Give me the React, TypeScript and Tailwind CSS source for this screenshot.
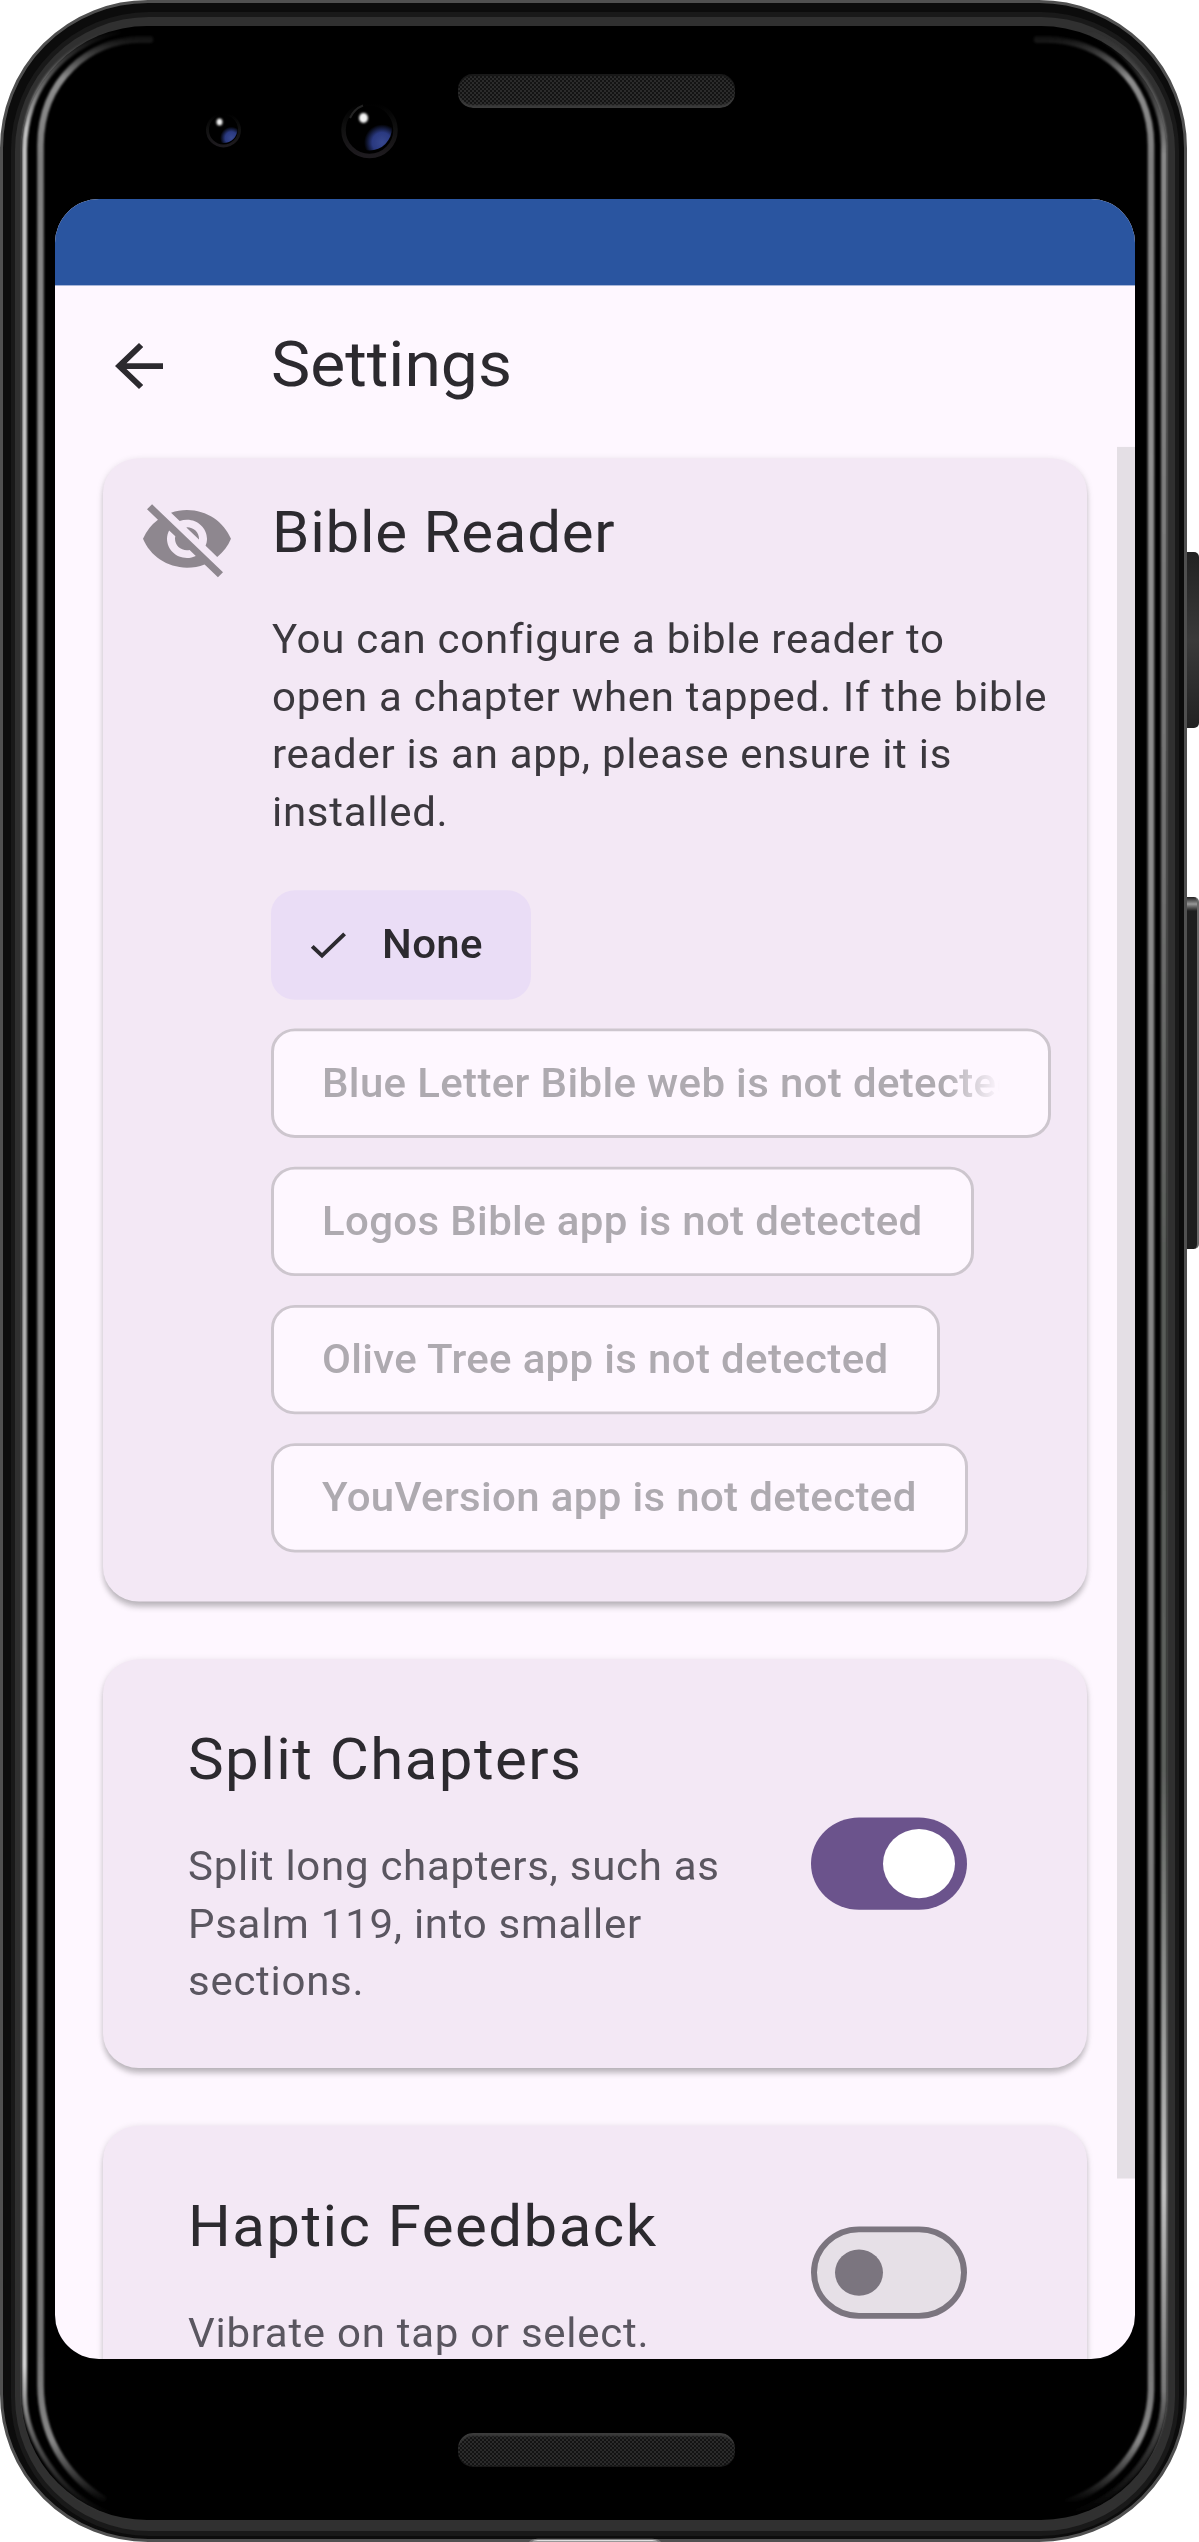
import type { ReactNode } from "react";
import { MdArrowBack, MdCheck, MdVisibilityOff } from "react-icons/md";

const READERS = [
  "Blue Letter Bible web is not detected",
  "Logos Bible app is not detected",
  "Olive Tree app is not detected",
  "YouVersion app is not detected",
];

function Card({ children, className }: { children: ReactNode; className: string }) {
  return (
    <section
      className={`flex shrink-0 rounded-[36px] bg-[#f3e8f5] shadow-[0_6px_6px_-1px_rgba(0,0,0,0.2),0_2px_8px_rgba(0,0,0,0.13)] ${className}`}
    >
      {children}
    </section>
  );
}

function Toggle({ on }: { on: boolean }) {
  return on ? (
    <div role="switch" aria-checked="true" className="flex h-24 w-[156px] shrink-0 items-center justify-end rounded-full bg-[#6b538c] pr-3">
      <div className="size-[72px] rounded-full bg-white" />
    </div>
  ) : (
    <div role="switch" aria-checked="false" className="flex h-24 w-[156px] shrink-0 items-center rounded-full border-[6px] border-[#7b757f] bg-[#e6e0e7] pl-[18px]">
      <div className="size-12 rounded-full bg-[#7b757f]" />
    </div>
  );
}

function ToggleCard({ title, text, on }: { title: string; text: string; on: boolean }) {
  return (
    <Card className="items-center justify-between py-[60px] pl-[85px] pr-[120px]">
      <div className="w-[560px]">
        <h2 className="text-[60px] leading-[90px] tracking-[1.45px]">{title}</h2>
        <p className="mt-9 text-[42px] leading-[60px] tracking-[0.72px] text-[#5a5660]">{text}</p>
      </div>
      <Toggle on={on} />
    </Card>
  );
}

function Speaker({ className }: { className: string }) {
  return (
    <div
      className={`ml-[3px] h-[34px] w-[277px] rounded-[15px] bg-[#141414] bg-[repeating-conic-gradient(#2b2b2b_0_25%,#131313_0_50%)] bg-[length:4px_4px] ${className}`}
    />
  );
}

function Bezel() {
  return (
    <svg className="pointer-events-none absolute -left-[3px] -top-[3px] h-[2542px] w-[1187px]" viewBox="0 0 1187 2542" fill="none">
      <defs>
        <linearGradient id="edge" gradientUnits="userSpaceOnUse" x1="0" y1="30" x2="0" y2="2515">
          <stop offset="0" stopColor="#aaa" stopOpacity="0" />
          <stop offset="0.04" stopColor="#c0c0c0" />
          <stop offset="0.3" stopColor="#c8c8c8" />
          <stop offset="0.5" stopColor="#b0b0b0" />
          <stop offset="0.94" stopColor="#d4d4d4" />
          <stop offset="1" stopColor="#888" stopOpacity="0" />
        </linearGradient>
        <linearGradient id="edgeRight" gradientUnits="userSpaceOnUse" x1="0" y1="30" x2="0" y2="2515">
          <stop offset="0" stopColor="#666" stopOpacity="0" />
          <stop offset="0.05" stopColor="#888" />
          <stop offset="0.35" stopColor="#6e6e6e" />
          <stop offset="0.5" stopColor="#585b58" />
          <stop offset="0.7" stopColor="#5c5f5c" />
          <stop offset="0.87" stopColor="#bdbdbd" />
          <stop offset="0.95" stopColor="#777" />
          <stop offset="1" stopColor="#444" stopOpacity="0" />
        </linearGradient>
        <linearGradient id="inner" gradientUnits="userSpaceOnUse" x1="0" y1="39" x2="0" y2="2503">
          <stop offset="0" stopColor="#777" stopOpacity="0.15" />
          <stop offset="0.016" stopColor="#8c8c8c" />
          <stop offset="0.05" stopColor="#7e7e7e" />
          <stop offset="0.17" stopColor="#909090" />
          <stop offset="0.94" stopColor="#767676" />
          <stop offset="0.975" stopColor="#858585" />
          <stop offset="1" stopColor="#777" stopOpacity="0" />
        </linearGradient>
        <linearGradient id="rim" x1="0" y1="0" x2="0" y2="1">
          <stop offset="0" stopColor="#000" />
          <stop offset="0.5" stopColor="#111" />
          <stop offset="1" stopColor="#1e1b1f" />
        </linearGradient>
        <filter id="soft" x="-10%" y="-1%" width="120%" height="102%">
          <feGaussianBlur stdDeviation="1.1" />
        </filter>
        <filter id="glow" x="-100%" y="-100%" width="300%" height="300%">
          <feGaussianBlur stdDeviation="1.3" />
        </filter>
        <radialGradient id="blue" cx="0.78" cy="0.82" r="0.4">
          <stop offset="0" stopColor="#37488f" />
          <stop offset="0.55" stopColor="#2a3980" />
          <stop offset="1" stopColor="#000" />
        </radialGradient>
      </defs>
      <g filter="url(#soft)" strokeLinecap="round">
        <path d="M119 31C77 42 46 68 32 106Q24.500 128 24.500 150V2395C25 2440 60 2496 110 2514" stroke="url(#edge)" strokeWidth="5" />
        <path d="M1090 33C1125 48 1163 90 1164 145V2400C1162 2450 1125 2497 1070 2514" stroke="url(#edgeRight)" strokeWidth="6" />
        <path d="M150 39.500H140C90 39.500 41 80 40.500 145V2385C41 2435 64 2474 103 2499" stroke="url(#inner)" strokeWidth="6.500" />
        <path d="M1037 39.500H1047C1100 39.500 1151 80 1151 145V2390C1150 2440 1118 2484 1068 2502" stroke="url(#inner)" strokeWidth="6.500" />
      </g>
      <circle cx="223.500" cy="130" r="16" stroke="url(#rim)" strokeWidth="3" />
      <circle cx="223.500" cy="129" r="14" fill="url(#blue)" />
      <ellipse cx="219.500" cy="122" rx="3" ry="3.500" fill="#f2f2f2" filter="url(#glow)" />
      <circle cx="369.500" cy="130" r="26" stroke="url(#rim)" strokeWidth="4.500" />
      <circle cx="369.500" cy="128" r="22.500" fill="url(#blue)" />
      <path d="M350 118Q354 109 363 105.500" stroke="#222" strokeWidth="2" />
      <ellipse cx="363.500" cy="118" rx="4.500" ry="5" fill="#f4f4f4" filter="url(#glow)" />
      <path d="M530 2542Q532 2539.500 538 2539.500H652Q658 2539.500 660 2542Z" fill="#fff" stroke="#7a7a7a" strokeWidth="1.500" />
    </svg>
  );
}

function Screen() {
  return (
    <main className="h-[2160px] w-[1080px] overflow-hidden rounded-[44px] bg-[#fef7ff]">
      <div className="flex h-[2250px] w-[1080px] origin-top-left scale-y-[0.96] flex-col text-[#2c2a2f]">
        <div className="h-[90px] shrink-0 bg-[#2a55a0]" />
        <header className="flex h-[168px] shrink-0 items-center pl-12">
          <MdArrowBack className="size-[72px]" />
          <h1 className="-mt-0.5 ml-24 text-[66px] leading-[84px]">Settings</h1>
        </header>
        <div className="flex min-h-0 flex-1 justify-between overflow-hidden">
          <div className="ml-12 mt-3 flex w-[984px] flex-col gap-[60px]">
            <Card className="h-[1191px] pl-9 pr-9">
              <MdVisibilityOff className="mt-9 size-24 shrink-0 text-[#8e878f]" />
              <div className="ml-9 mt-[33px] w-[780px]">
                <h2 className="pl-px text-[60px] leading-[90px] tracking-[0.75px]">Bible Reader</h2>
                <p className="mt-9 pl-px text-[42px] leading-[60px] tracking-[0.72px] text-[#3b383e]">
                  You can configure a bible reader to
                  <br />
                  open a chapter when tapped. If the bible
                  <br />
                  reader is an app, please ensure it is
                  <br />
                  installed.
                </p>
                <div className="mt-[51px] flex flex-col items-start gap-[30px] text-[42px] font-medium leading-[60px] tracking-[0.34px]">
                  <button className="flex h-[114px] items-center rounded-3xl bg-[#eaddf6] pl-[33px] pr-12">
                    <MdCheck className="mr-[30px] size-12" />
                    None
                  </button>
                  {READERS.map((name) => (
                    <button key={name} className="flex h-[114px] max-w-full items-center rounded-3xl border-[3px] border-[#cdc6ce] bg-[#fef7ff] px-12">
                      <span
                        className={`overflow-hidden whitespace-nowrap text-[#aeaab0] ${
                          name.startsWith("Blue") ? "[mask-image:linear-gradient(to_right,#000_92%,transparent)]" : ""
                        }`}
                      >
                        {name}
                      </span>
                    </button>
                  ))}
                </div>
              </div>
            </Card>
            <ToggleCard title="Split Chapters" text="Split long chapters, such as Psalm 119, into smaller sections." on />
            <ToggleCard title="Haptic Feedback" text="Vibrate on tap or select." on={false} />
          </div>
          <div className="h-[1804px] w-[18px] bg-[#e4dfe5]" />
        </div>
      </div>
    </main>
  );
}

export default function App() {
  return (
    <div className="flex h-[2542px] w-[1199px] overflow-hidden bg-white font-['Roboto',sans-serif]">
      <div className="relative h-[2542px] w-[1187px] shrink-0 rounded-[148px] border-[3px] border-[#505050] bg-[#0c0c0c] pb-[3px] pl-2 pr-[5px] pt-[9px]">
        <div className="h-full rounded-[138px] bg-[#191919] px-1 py-[5px]">
          <div className="h-full rounded-[134px] bg-[#303030] pb-[11px] pl-1.5 pr-2 pt-[9px]">
            <div className="flex h-full flex-col items-center rounded-[126px] bg-black pl-[21px] pr-[19px]">
              <div className="mt-12 flex h-[125px] shrink-0 flex-col items-center">
                <Speaker className="shadow-[inset_0_-4px_2px_-1px_#3c3c3c,inset_0_2px_1px_#181818]" />
              </div>
              <Screen />
              <div className="mt-[74px] flex flex-col items-center">
                <Speaker className="shadow-[inset_0_4px_2px_-1px_#3c3c3c,inset_0_-1px_1px_#181818]" />
              </div>
            </div>
          </div>
        </div>
        <Bezel />
      </div>
      <div className="flex w-3 flex-col">
        <div className="mt-[552px] h-[176px] rounded-r-[5px] bg-linear-to-b from-[#222] via-[#3a3a3a] to-[#222]" />
        <div className="mt-[169px] h-[352px] rounded-r-[5px] border-r-2 border-[#6a6a6a] bg-linear-to-b from-[#222] from-0% via-[#999] via-2% to-[#1e1e1e] to-4%" />
      </div>
    </div>
  );
}
